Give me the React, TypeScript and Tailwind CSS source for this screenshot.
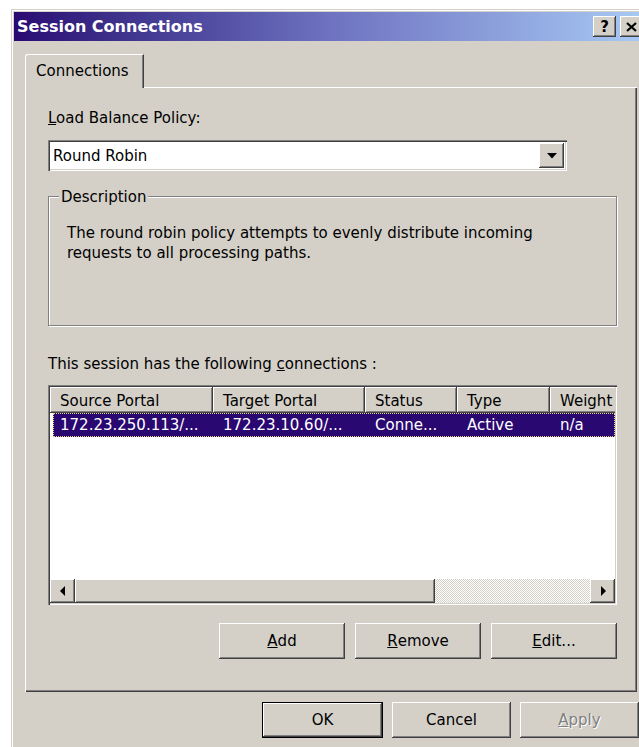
import type { ReactNode } from "react";

// classic 3D edge helpers
const raised =
  "shadow-[inset_-1px_-1px_#404040,inset_1px_1px_#ffffff,inset_-2px_-2px_#808080,inset_2px_2px_#d4d0c8]";
const sunken =
  "shadow-[inset_1px_1px_#808080,inset_2px_2px_#404040,inset_-1px_-1px_#ffffff,inset_-2px_-2px_#d4d0c8]";

function Button({
  children,
  width,
  isDefault = false,
  disabled = false,
}: {
  children: ReactNode;
  width: string;
  isDefault?: boolean;
  disabled?: boolean;
}) {
  if (isDefault) {
    return (
      <div className={`${width} h-[36px] border border-black`}>
        <div className={`h-full flex items-center justify-center bg-[#d4d0c8] ${raised}`}>
          {children}
        </div>
      </div>
    );
  }
  return (
    <div
      className={`${width} h-[36px] flex items-center justify-center bg-[#d4d0c8] ${raised} ${
        disabled ? "text-[#808080] [text-shadow:1px_1px_0_#ffffff]" : ""
      }`}
    >
      {children}
    </div>
  );
}

function ArrowButton({ dir }: { dir: "left" | "right" }) {
  return (
    <div className={`w-[25px] h-full flex items-center justify-center bg-[#d4d0c8] ${raised}`}>
      <svg width="6" height="10" viewBox="0 0 6 10">
        {dir === "left" ? (
          <polygon points="5,0 5,10 0,5" fill="#000" />
        ) : (
          <polygon points="1,0 1,10 6,5" fill="#000" />
        )}
      </svg>
    </div>
  );
}

const columns = [
  { label: "Source Portal", w: "w-[163px]" },
  { label: "Target Portal", w: "w-[152px]" },
  { label: "Status", w: "w-[92px]" },
  { label: "Type", w: "w-[93px]" },
  { label: "Weight", w: "w-[100px]" },
];

const row = ["172.23.250.113/...", "172.23.10.60/...", "Conne...", "Active", "n/a"];

export default function App() {
  return (
    <div className="w-[639px] h-[747px] bg-white overflow-hidden pt-[9px] pl-[11px] font-['DejaVu_Sans',sans-serif] text-[15px] leading-[18px] text-black">
      {/* dialog window */}
      <div
        className={`w-[637px] h-[745px] bg-[#d4d0c8] p-[3px] shadow-[inset_1px_1px_#d4d0c8,inset_2px_2px_#ffffff,inset_-1px_-1px_#404040,inset_-2px_-2px_#808080]`}
      >
        {/* caption */}
        <div className="h-[29px] flex items-center pl-[3px] pr-[2px] bg-linear-to-r from-[#2a0872] via-[#6e72c0] to-[#a8caf4]">
          <span className="flex-1 text-white font-bold text-[16px]">
            Session Connections
          </span>
          <div className="flex gap-[4px]">
            <div className={`w-[23px] h-[21px] flex items-center justify-center bg-[#d4d0c8] ${raised}`}>
              <span className="font-bold text-[15px] leading-none pt-[1px]">?</span>
            </div>
            <div className={`w-[23px] h-[21px] flex items-center justify-center bg-[#d4d0c8] ${raised}`}>
              <svg width="11" height="10" viewBox="0 0 11 10">
                <path d="M1 1 L10 9 M10 1 L1 9" stroke="#000" strokeWidth="2.2" />
              </svg>
            </div>
          </div>
        </div>

        {/* tab strip + page */}
        <div className="pt-[13px] pl-[11px] pr-[8px]">
          <div className="relative z-10 -mb-px w-[119px] h-[34px] bg-[#d4d0c8] border-l border-t border-white rounded-tl-[3px] border-r border-r-[#404040] shadow-[inset_-1px_0_#808080] pl-[10px] pt-[7px]">
            Connections
          </div>

          <div className="w-[612px] h-[605px] pl-[23px] pt-[22px] shadow-[inset_1px_1px_#ffffff,inset_-1px_-1px_#404040,inset_-2px_-2px_#808080]">
            <div>
              <span className="underline">L</span>oad Balance Policy:
            </div>

            {/* combo box */}
            <div className={`mt-[13px] w-[519px] h-[31px] bg-white p-[3px] pr-[3px] flex ${sunken}`}>
              <div className="flex-1 flex items-center pl-[2px]">Round Robin</div>
              <div className={`w-[25px] h-[25px] flex items-center justify-center bg-[#d4d0c8] ${raised}`}>
                <svg width="10" height="6" viewBox="0 0 10 6">
                  <polygon points="0,0 10,0 5,5.5" fill="#000" />
                </svg>
              </div>
            </div>

            {/* description group */}
            <div className="relative mt-[25px] w-[569px] h-[130px] border border-[#808080] shadow-[inset_1px_1px_#ffffff,1px_1px_#ffffff] pl-[18px] pt-[26px] leading-[20px]">
              <span className="absolute left-[10px] top-[-9px] px-[2px] bg-[#d4d0c8] leading-[18px]">
                Description
              </span>
              <p>The round robin policy attempts to evenly distribute incoming</p>
              <p>requests to all processing paths.</p>
            </div>

            <div className="mt-[29px]">
              This session has the following <span className="underline">c</span>onnections :
            </div>

            {/* list view */}
            <div className={`mt-[12px] w-[569px] h-[220px] bg-white p-[2px] flex flex-col ${sunken}`}>
              <div className="flex h-[26px] overflow-hidden">
                {columns.map((c) => (
                  <div
                    key={c.label}
                    className={`${c.w} shrink-0 h-full flex items-center pl-[10px] pt-[2px] bg-[#d4d0c8] ${raised}`}
                  >
                    {c.label}
                  </div>
                ))}
              </div>

              <div className="ml-[3px] h-[24px] flex bg-[#2a0872] text-white border border-dotted border-[#e6d47a] overflow-hidden">
                {row.map((v, i) => (
                  <div
                    key={i}
                    className={`${i === 0 ? "w-[159px] pl-[6px]" : `${columns[i].w} pl-[10px]`} shrink-0 flex items-center`}
                  >
                    {v}
                  </div>
                ))}
              </div>

              <div className="flex-1" />

              {/* horizontal scroll bar */}
              <div className="h-[24px] flex">
                <ArrowButton dir="left" />
                <div className={`w-[360px] h-full bg-[#d4d0c8] ${raised}`} />
                <div className="flex-1 h-full [background-image:repeating-conic-gradient(#ffffff_0_25%,#d4d0c8_0_50%)] [background-size:2px_2px]" />
                <ArrowButton dir="right" />
              </div>
            </div>

            <div className="mt-[18px] w-[569px] flex justify-end gap-[10px]">
              <Button width="w-[126px]">
                <span className="underline">A</span>dd
              </Button>
              <Button width="w-[126px]">
                <span className="underline">R</span>emove
              </Button>
              <Button width="w-[126px]">
                <span className="underline">E</span>dit...
              </Button>
            </div>
          </div>
        </div>

        {/* dialog buttons */}
        <div className="mt-[10px] flex justify-end gap-[9px] pr-[6px]">
          <Button width="w-[121px]" isDefault>
            OK
          </Button>
          <Button width="w-[119px]">Cancel</Button>
          <Button width="w-[119px]" disabled>
            <span className="underline">A</span>pply
          </Button>
        </div>
      </div>
    </div>
  );
}
